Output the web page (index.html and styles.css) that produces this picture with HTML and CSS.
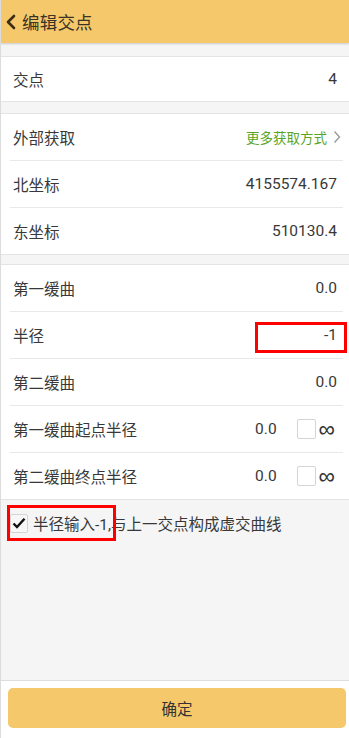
FILE: index.html
```html
<!DOCTYPE html>
<html lang="zh-CN">
<head>
<meta charset="utf-8">
<link rel="stylesheet" href="styles.css">
</head>
<body>
<div class="page">
  <header class="topbar">
    <svg class="back" width="12" height="16" viewBox="0 0 12 16"><path d="M9 2 L3 8 L9 14" fill="none" stroke="#3a2d14" stroke-width="2.6" stroke-linecap="round" stroke-linejoin="round"/></svg>
    <span class="title">编辑交点</span>
  </header>

  <section class="group g1">
    <div class="row short"><span class="label">交点</span><span class="value">4</span></div>
  </section>

  <section class="group g2">
    <div class="row"><span class="label">外部获取</span><span class="more">更多获取方式<svg class="chev" width="8" height="14" viewBox="0 0 8 14"><path d="M1.5 1.5 L6.5 7 L1.5 12.5" fill="none" stroke="#9a9a9a" stroke-width="1.4"/></svg></span></div>
    <div class="row"><span class="label">北坐标</span><span class="value">4155574.167</span></div>
    <div class="row"><span class="label">东坐标</span><span class="value">510130.4</span></div>
  </section>

  <section class="group g3">
    <div class="row"><span class="label">第一缓曲</span><span class="value">0.0</span></div>
    <div class="row mark-row"><span class="label">半径</span><span class="value">-1</span><span class="redbox rb-radius"></span></div>
    <div class="row"><span class="label">第二缓曲</span><span class="value">0.0</span></div>
    <div class="row"><span class="label">第一缓曲起点半径</span><span class="right"><span class="value">0.0</span><span class="box"></span><span class="inf">∞</span></span></div>
    <div class="row"><span class="label">第二缓曲终点半径</span><span class="right"><span class="value">0.0</span><span class="box"></span><span class="inf">∞</span></span></div>
  </section>

  <div class="note">
    <span class="check"><svg width="14" height="12" viewBox="0 0 14 12"><path d="M1.5 6.5 L5 10 L12.5 1.8" fill="none" stroke="#111" stroke-width="2.4"/></svg></span>
    <span class="note-text">半径输入-1,与上一交点构成虚交曲线</span>
    <span class="redbox rb-note"></span>
  </div>

  <div class="spacer"></div>

  <footer class="footer">
    <button class="ok">确定</button>
  </footer>
</div>
</body>
</html>
```

FILE: styles.css
```css
html, body {
  margin: 0;
  padding: 0;
}
body {
  background: #f5f5f5;
  font-family: "Roboto", "Noto Sans CJK SC", sans-serif;
  color: #333;
}
.page {
  width: 349px;
  height: 738px;
  display: flex;
  flex-direction: column;
  box-sizing: border-box;
  border-left: 1px solid #dcdcdc;
  overflow: hidden;
}
.topbar {
  height: 43px;
  flex: none;
  background: #f5c96b;
  display: flex;
  align-items: center;
  padding-left: 4px;
  box-shadow: 0 1px 2px rgba(0,0,0,0.18);
  position: relative;
  z-index: 1;
}
.back {
  margin-right: 5px;
}
.title {
  font-size: 17.5px;
  color: #3a3326;
  letter-spacing: 0.2px;
}
.group {
  background: #fff;
  border-top: 1px solid #e4e4e4;
  border-bottom: 1px solid #e4e4e4;
  flex: none;
}
.g1 { margin-top: 13px; }
.g2 { margin-top: 11px; }
.g3 { margin-top: 9px; }
.row {
  height: 46px;
  margin: 0 6px 0 9px;
  padding: 0 6px 0 3px;
  display: flex;
  align-items: center;
  justify-content: space-between;
  font-size: 15.5px;
  position: relative;
}
.row.short { height: 44px; }
.row + .row {
  border-top: 1px solid #e8e8e8;
}
.label { color: #383838; }
.value { color: #383838; }
.more {
  color: #5aa528;
  font-size: 13.5px;
  display: flex;
  align-items: center;
  margin-right: -4px;
}
.chev { margin-left: 6px; }
.right {
  display: flex;
  align-items: center;
  margin-right: 2px;
}
.box {
  width: 19px;
  height: 20px;
  border: 1px solid #d4d4d4;
  border-radius: 2px;
  margin-left: 20px;
  box-sizing: border-box;
}
.inf {
  font-family: "Liberation Sans", sans-serif;
  font-size: 23px;
  margin-left: 3px;
  line-height: 1;
  color: #333;
}
.redbox {
  position: absolute;
  border: 3px solid #ff0000;
  box-sizing: border-box;
  pointer-events: none;
}
.rb-radius {
  right: -4px;
  top: 10px;
  width: 92px;
  height: 31px;
}
.note {
  position: relative;
  display: flex;
  align-items: center;
  margin-top: 11px;
  padding-left: 9px;
  height: 24px;
  flex: none;
}
.check {
  width: 18px;
  height: 19px;
  border: 1px solid #d4d4d4;
  border-radius: 2px;
  box-sizing: border-box;
  display: flex;
  align-items: center;
  justify-content: center;
  background: #f7f7f7;
  margin-right: 5px;
}
.note-text {
  font-size: 15.5px;
  color: #383838;
}
.rb-note {
  left: 6px;
  top: -6px;
  width: 109px;
  height: 36px;
}
.spacer {
  flex: 1;
}
.footer {
  flex: none;
  background: #fff;
  border-top: 1px solid #dedede;
  padding: 7px 2px 10px 7px;
}
.ok {
  display: block;
  width: 338px;
  height: 40px;
  border: none;
  border-radius: 5px;
  background: #f5c96b;
  color: #333;
  font-family: "Roboto", "Noto Sans CJK SC", sans-serif;
  font-size: 15.5px;
  padding: 0;
}
```
